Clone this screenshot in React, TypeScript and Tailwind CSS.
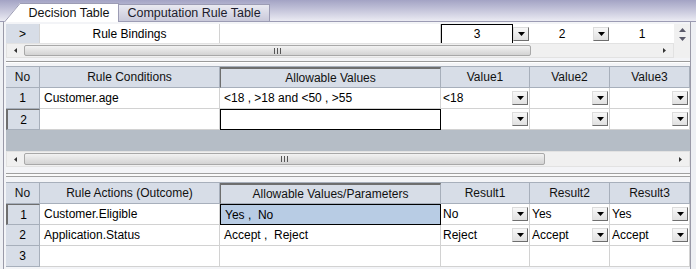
import React from 'react';

const Tri = () => (
  <svg width="7" height="4" viewBox="0 0 7 4">
    <path d="M0 0h7L3.5 4z" fill="#000" />
  </svg>
);

const DropBtn = () => (
  <div className="w-[16px] h-[14px] border border-t-[#dcdcdc] border-l-[#dcdcdc] border-r-[#6e6e6e] border-b-[#6e6e6e] bg-gradient-to-b from-[#f8f8f8] to-[#e0e0e0] flex items-center justify-center shrink-0">
    <Tri />
  </div>
);

const LeftArrow = () => (
  <svg width="3" height="5" viewBox="0 0 3 5">
    <path d="M3 0L0 2.5L3 5z" fill="#333" />
  </svg>
);

const RightArrow = () => (
  <svg width="3" height="5" viewBox="0 0 3 5">
    <path d="M0 0L3 2.5L0 5z" fill="#333" />
  </svg>
);

const Grip = () => (
  <svg width="7" height="6" viewBox="0 0 7 6">
    <path d="M0.5 0v6M3.5 0v6M6.5 0v6" stroke="#555" strokeWidth="1" />
  </svg>
);

interface ScrollProps {
  thumbClass: string;
}

const HScroll: React.FC<ScrollProps> = ({ thumbClass }) => (
  <div className="h-full flex items-stretch bg-[#f0f0f0] border border-[#e2e2e2]">
    <div className="w-[17px] flex items-center justify-center shrink-0">
      <LeftArrow />
    </div>
    <div
      className={`${thumbClass} my-[1px] rounded-[2px] border border-[#a8a8a8] bg-gradient-to-b from-[#f2f2f2] to-[#d3d3d3] flex items-center justify-center shrink-0`}
    >
      <Grip />
    </div>
    <div className="flex-1" />
    <div className="w-[17px] flex items-center justify-center shrink-0">
      <RightArrow />
    </div>
  </div>
);

const head = 'flex items-center justify-center bg-[#d7dde7] border-r border-b border-[#a7afbb] text-[#111]';
const noCell = 'flex items-center justify-center bg-[#d7dde7] border-r border-b border-[#a7afbb]';
const cell = 'flex items-center pl-[4px] bg-white border-r border-b border-[#d2d2d2] whitespace-nowrap';
const ddCell = 'flex items-center justify-between pl-[2px] pr-[1px] bg-white border-r border-b border-[#d2d2d2]';

const cols = 'grid grid-cols-[34px_180px_221px_89px_80px_80px]';

export default function App() {
  return (
    <div className="w-[696px] h-[269px] overflow-hidden flex flex-col bg-[#eef0f4] text-[12px] text-black font-['Liberation_Sans',Arial,sans-serif]">
      {/* tabs */}
      <div className="h-[22px] shrink-0 flex items-end pl-[4px] border-b border-[#9c9cb4] bg-gradient-to-b from-[#a3a3c4] to-[#ebebf3]">
        <div className="flex items-end -mb-px">
          <svg width="16" height="19" viewBox="0 0 16 19">
            <path d="M0 19L16 0V19z" fill="#fff" />
            <path d="M0.5 19L16 0.5" stroke="#9c9cb4" strokeWidth="1" />
          </svg>
          <div className="w-[99px] h-[19px] bg-white border-t border-r border-[#9c9cb4] flex items-center justify-center text-[12.5px] text-[#111]">
            Decision Table
          </div>
        </div>
        <div className="w-[151px] h-[17px] border-t border-r border-[#9c9cb4] bg-gradient-to-b from-[#e9e9f1] to-[#c9c9da] flex items-center justify-center text-[12.5px] text-[#1c1c2c]">
          Computation Rule Table
        </div>
      </div>

      {/* panel */}
      <div className="flex-1 ml-[3px] mr-[5px] pl-[2px] pt-[2px] border-l border-r border-[#9a9aa8] bg-[#f3f4f7] flex flex-col">
        {/* rule bindings */}
        <div className="grid grid-cols-[34px_180px_221px_89px_80px_64px_16px] h-[19px]">
          <div className="flex items-center justify-center bg-[#d7dde7] border-r border-[#d2d2d2]">&gt;</div>
          <div className="flex items-center justify-center bg-white border-r border-[#d2d2d2]">Rule Bindings</div>
          <div className="bg-white border-r border-[#d2d2d2]" />
          <div className="flex items-center bg-white">
            <div className="w-[72px] h-full border border-black flex items-center justify-center">3</div>
            <DropBtn />
          </div>
          <div className="flex items-center bg-white pl-[1px]">
            <div className="w-[62px] flex items-center justify-center">2</div>
            <DropBtn />
          </div>
          <div className="flex items-center justify-center bg-white">1</div>
          <div className="flex flex-col items-center justify-center gap-[5px] bg-[#f0f0f0]">
            <svg width="7" height="4" viewBox="0 0 7 4">
              <path d="M0 4L3.5 0L7 4z" fill="#5a5a6a" />
            </svg>
            <svg width="7" height="4" viewBox="0 0 7 4">
              <path d="M0 0h7L3.5 4z" fill="#5a5a6a" />
            </svg>
          </div>
        </div>
        <div className="flex h-[15px]">
          <div className="w-[668px]">
            <HScroll thumbClass="w-[507px]" />
          </div>
          <div className="flex-1 bg-[#f0f0f0]" />
        </div>

        {/* splitter */}
        <div className="h-[8px] flex flex-col justify-center">
          <div className="h-[2px] border-t border-[#9a9a9a] border-b border-b-white" />
        </div>

        {/* rule conditions */}
        <div className={`${cols} h-[22px] border-t border-[#a7afbb]`}>
          <div className={head}>No</div>
          <div className={head}>Rule Conditions</div>
          <div className={`${head} border-t-2 border-t-[#6e6e6e] border-l border-l-[#6e6e6e]`}>Allowable Values</div>
          <div className={head}>Value1</div>
          <div className={head}>Value2</div>
          <div className={head}>Value3</div>
        </div>
        <div className={`${cols} h-[21px]`}>
          <div className={noCell}>1</div>
          <div className={cell}>Customer.age</div>
          <div className={cell}>&lt;18 , &gt;18 and &lt;50 , &gt;55</div>
          <div className={ddCell}>
            <span>&lt;18</span>
            <DropBtn />
          </div>
          <div className={ddCell}>
            <span />
            <DropBtn />
          </div>
          <div className={ddCell}>
            <span />
            <DropBtn />
          </div>
        </div>
        <div className={`${cols} h-[21px]`}>
          <div className={`${noCell} border-l-2 border-l-[#6e6e6e] border-t border-t-[#6e6e6e]`}>2</div>
          <div className={cell} />
          <div className="bg-white border border-black" />
          <div className={ddCell}>
            <span />
            <DropBtn />
          </div>
          <div className={ddCell}>
            <span />
            <DropBtn />
          </div>
          <div className={ddCell}>
            <span />
            <DropBtn />
          </div>
        </div>
        <div className="h-[21px] w-[684px] bg-[#b5bdc6]" />
        <div className="h-[16px] w-[684px]">
          <HScroll thumbClass="w-[521px]" />
        </div>

        {/* separator */}
        <div className="h-[6px]" />
        <div className="h-[4px] w-[684px] border-t border-b border-[#a0a0a0] bg-[#fafafa]" />
        <div className="h-[5px]" />

        {/* rule actions */}
        <div className={`${cols} h-[22px] border-t border-[#a7afbb]`}>
          <div className={head}>No</div>
          <div className={head}>Rule Actions (Outcome)</div>
          <div className={`${head} border-t-2 border-t-[#6e6e6e] border-l border-l-[#6e6e6e]`}>Allowable Values/Parameters</div>
          <div className={head}>Result1</div>
          <div className={head}>Result2</div>
          <div className={head}>Result3</div>
        </div>
        <div className={`${cols} h-[21px]`}>
          <div className={`${noCell} border-l-2 border-l-[#6e6e6e] border-t border-t-[#6e6e6e]`}>1</div>
          <div className={cell}>Customer.Eligible</div>
          <div className="flex items-center pl-[4px] bg-[#b8cce4] border border-black whitespace-nowrap">Yes ,&nbsp; No</div>
          <div className={ddCell}>
            <span>No</span>
            <DropBtn />
          </div>
          <div className={ddCell}>
            <span>Yes</span>
            <DropBtn />
          </div>
          <div className={ddCell}>
            <span>Yes</span>
            <DropBtn />
          </div>
        </div>
        <div className={`${cols} h-[21px]`}>
          <div className={noCell}>2</div>
          <div className={cell}>Application.Status</div>
          <div className={cell}>Accept ,&nbsp; Reject</div>
          <div className={ddCell}>
            <span>Reject</span>
            <DropBtn />
          </div>
          <div className={ddCell}>
            <span>Accept</span>
            <DropBtn />
          </div>
          <div className={ddCell}>
            <span>Accept</span>
            <DropBtn />
          </div>
        </div>
        <div className={`${cols} h-[21px]`}>
          <div className={noCell}>3</div>
          <div className={cell} />
          <div className={cell} />
          <div className={cell} />
          <div className={cell} />
          <div className={cell} />
        </div>
      </div>
    </div>
  );
}
